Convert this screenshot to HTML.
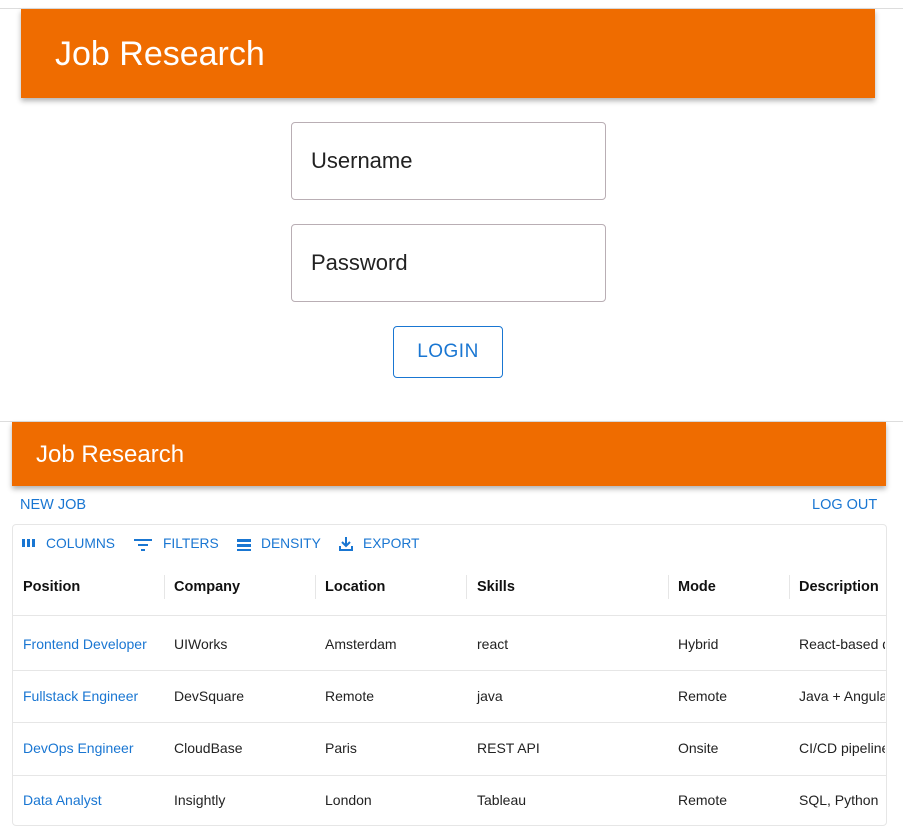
<!DOCTYPE html>
<html><head><style>
body{margin:0;width:903px;height:803px;overflow:hidden;background:#fff;font-family:"Liberation Sans",Arial,sans-serif;position:relative}
.a{position:absolute}
.hdr{background:#ef6c00;color:#fff;box-shadow:0 3px 5px rgba(0,0,0,.3)}
.inp{border:1px solid #b9aeb4;border-radius:4px;width:315px;height:78px;left:291px;font-size:22px;color:#222;box-sizing:border-box;padding-left:19px;line-height:76px}
.t{font-size:14px;color:#222}
.blue{color:#1976d2}
.t.blue{color:#1976d2}
.h{font-size:14.5px;font-weight:bold;color:#111}
.line{left:13px;width:873px;height:1px;background:#e6e6e6}
.sep{width:1px;height:24px;background:#e6e6e6;top:575px}
</style></head><body>
<div class="a" style="left:0;top:8px;width:903px;height:1px;background:#ddd"></div>
<div class="a hdr" style="left:21px;top:9px;width:854px;height:89px"><div class="a" style="left:34px;top:26px;font-size:34px">Job Research</div></div>
<div class="a inp" style="top:122px">Username</div>
<div class="a inp" style="top:224px">Password</div>
<div class="a blue" style="left:393px;top:326px;width:108px;height:50px;border:1px solid #1976d2;border-radius:4px;font-size:19px;line-height:50px;text-align:center;letter-spacing:.5px">LOGIN</div>
<div class="a" style="left:0;top:421px;width:903px;height:1px;background:#ddd"></div>
<div class="a hdr" style="left:12px;top:422px;width:874px;height:64px"><div class="a" style="left:24px;top:19px;font-size:24px">Job Research</div></div>
<div class="a blue" style="left:20px;top:497px;font-size:14.5px">NEW JOB</div>
<div class="a blue" style="left:812px;top:497px;font-size:14.5px">LOG OUT</div>
<div class="a" style="left:12px;top:524px;width:873px;height:300px;border:1px solid #e6e6e6;border-radius:4px"></div>
<div class="a blue" style="left:20px;top:536px;font-size:13.8px;white-space:nowrap">
<svg width="16" height="14" style="vertical-align:-2px;margin-right:10px"><rect x="2" y="3" width="3" height="8" fill="#1976d2"/><rect x="7" y="3" width="3" height="8" fill="#1976d2"/><rect x="12" y="3" width="3" height="8" fill="#1976d2"/></svg>COLUMNS</div>
<div class="a blue" style="left:133px;top:536px;font-size:13.8px;white-space:nowrap">
<svg width="20" height="14" style="vertical-align:-3px;margin-right:10px"><rect x="1" y="2" width="18" height="2" fill="#1976d2"/><rect x="5" y="7" width="10" height="2" fill="#1976d2"/><rect x="8" y="12" width="4" height="2" fill="#1976d2"/></svg>FILTERS</div>
<div class="a blue" style="left:236px;top:536px;font-size:13.8px;white-space:nowrap">
<svg width="16" height="14" style="vertical-align:-3px;margin-right:9px"><rect x="1" y="2" width="14" height="3" fill="#1976d2"/><rect x="1" y="7" width="14" height="3" fill="#1976d2"/><rect x="1" y="12" width="14" height="2" fill="#1976d2"/></svg>DENSITY</div>
<div class="a blue" style="left:338px;top:536px;font-size:13.8px;white-space:nowrap">
<svg width="16" height="16" style="vertical-align:-4px;margin-right:9px" fill="none" stroke="#1976d2" stroke-width="2"><path d="M8 1v9M4 6l4 4 4-4M2 10v4h12v-4"/></svg>EXPORT</div>
<div class="a sep" style="left:164px"></div><div class="a sep" style="left:315px"></div><div class="a sep" style="left:466px"></div><div class="a sep" style="left:668px"></div><div class="a sep" style="left:789px"></div>
<div class="a h" style="left:23px;top:579px">Position</div>
<div class="a h" style="left:174px;top:579px">Company</div>
<div class="a h" style="left:325px;top:579px">Location</div>
<div class="a h" style="left:477px;top:579px">Skills</div>
<div class="a h" style="left:678px;top:579px">Mode</div>
<div class="a h" style="left:799px;top:579px;width:86px;overflow:hidden;white-space:nowrap">Description</div>
<div class="a line" style="top:615px"></div>
<div class="a line" style="top:670px"></div>
<div class="a line" style="top:722px"></div>
<div class="a line" style="top:775px"></div>
<div class="a t blue" style="left:23px;top:636px">Frontend Developer</div><div class="a t" style="left:174px;top:636px">UIWorks</div><div class="a t" style="left:325px;top:636px">Amsterdam</div><div class="a t" style="left:477px;top:636px">react</div><div class="a t" style="left:678px;top:636px">Hybrid</div><div class="a t" style="left:799px;top:636px;width:86px;overflow:hidden;white-space:nowrap">React-based dashboard</div>
<div class="a t blue" style="left:23px;top:688px">Fullstack Engineer</div><div class="a t" style="left:174px;top:688px">DevSquare</div><div class="a t" style="left:325px;top:688px">Remote</div><div class="a t" style="left:477px;top:688px">java</div><div class="a t" style="left:678px;top:688px">Remote</div><div class="a t" style="left:799px;top:688px;width:86px;overflow:hidden;white-space:nowrap">Java + Angular app</div>
<div class="a t blue" style="left:23px;top:740px">DevOps Engineer</div><div class="a t" style="left:174px;top:740px">CloudBase</div><div class="a t" style="left:325px;top:740px">Paris</div><div class="a t" style="left:477px;top:740px">REST API</div><div class="a t" style="left:678px;top:740px">Onsite</div><div class="a t" style="left:799px;top:740px;width:86px;overflow:hidden;white-space:nowrap">CI/CD pipelines</div>
<div class="a t blue" style="left:23px;top:792px">Data Analyst</div><div class="a t" style="left:174px;top:792px">Insightly</div><div class="a t" style="left:325px;top:792px">London</div><div class="a t" style="left:477px;top:792px">Tableau</div><div class="a t" style="left:678px;top:792px">Remote</div><div class="a t" style="left:799px;top:792px;width:86px;overflow:hidden;white-space:nowrap">SQL, Python</div>
</body></html>
